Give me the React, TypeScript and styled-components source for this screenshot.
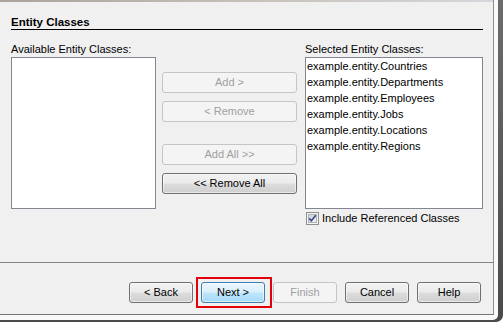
import React from "react";
import styled, { createGlobalStyle, css } from "styled-components";

const GlobalStyle = createGlobalStyle`
  html, body {
    margin: 0;
    padding: 0;
  }
  body {
    font-family: "Liberation Sans", Arial, sans-serif;
    font-size: 11px;
    color: #000;
    background: #fff;
  }
`;

const Frame = styled.div`
  width: 503px;
  height: 322px;
  background: linear-gradient(#6c6c6c, #4a4a4a);
  border-bottom-right-radius: 7px;
  overflow: hidden;
`;

const Client = styled.div`
  width: 498px;
  height: 320px;
  background: #f9f9f9;
  border-bottom-right-radius: 5px;
`;

const Panel = styled.div`
  width: 494px;
  height: 315px;
  box-sizing: border-box;
  background: #f0f0f0;
  border-right: 1px solid #8e8e8e;
  border-bottom: 1px solid #777;
  display: flex;
  flex-direction: column;
`;

const TopEdge = styled.div`
  height: 2px;
  background: linear-gradient(to right, #a9a39b, #c8c3bc 55%, #d6d6dc);
`;

const Header = styled.div`
  margin: 0 10px 0 11px;
  padding-top: 13px;
  border-bottom: 1px solid #000;
`;

const Title = styled.div`
  font-weight: bold;
  font-size: 11.5px;
  line-height: 14px;
`;

const Body = styled.div`
  flex: 1;
  display: flex;
  padding: 13px 0 0 11px;
  gap: 6px;
`;

const Column = styled.div<{ $width: number }>`
  width: ${(p) => p.$width}px;
  display: flex;
  flex-direction: column;
`;

const Label = styled.div`
  line-height: 13px;
  margin-bottom: 1px;
  white-space: nowrap;
`;

const ListBox = styled.div`
  height: 152px;
  box-sizing: border-box;
  border: 1px solid #828790;
  background: #fff;
  padding-left: 1px;
`;

const ListItem = styled.div`
  line-height: 16px;
  white-space: nowrap;
`;

const Middle = styled.div`
  width: 135px;
  padding-top: 29px;
  margin-right: 2px;
  display: flex;
  flex-direction: column;
  gap: 22px;
`;

const ButtonStack = styled.div`
  display: flex;
  flex-direction: column;
  gap: 8px;
`;

type Variant = "normal" | "disabled" | "default";

const Button = styled.button<{ $variant?: Variant; $width?: number }>`
  width: ${(p) => (p.$width ? `${p.$width}px` : "100%")};
  height: 21px;
  box-sizing: border-box;
  padding: 0;
  font-family: "Liberation Sans", Arial, sans-serif;
  font-size: 11px;
  line-height: 19px;
  text-align: center;
  border-radius: 3px;
  color: #000;
  border: 1px solid #707070;
  background: linear-gradient(#f2f2f2 0%, #ebebeb 48%, #dddddd 52%, #cfcfcf 100%);
  box-shadow: inset 0 0 0 1px rgba(255, 255, 255, 0.55);
  ${(p) =>
    p.$variant === "disabled" &&
    css`
      color: #a0a0a0;
      border-color: #c3c5c7;
      background: #f4f4f4;
      box-shadow: none;
    `}
  ${(p) =>
    p.$variant === "default" &&
    css`
      border-color: #3c7fb1;
      background: linear-gradient(#eaf6fd 0%, #d9f0fc 48%, #bee6fd 52%, #a7d9f5 100%);
    `}
`;

const CheckRow = styled.label`
  display: flex;
  align-items: center;
  gap: 3px;
  margin-top: 3px;
  padding-left: 1px;
  line-height: 13px;
  white-space: nowrap;
`;

const Footer = styled.div`
  height: 52px;
  box-sizing: border-box;
  border-top: 1px solid #858585;
  padding: 19px 12px 0 0;
  display: flex;
  justify-content: flex-end;
  align-items: flex-start;
  gap: 8px;
`;

const Highlight = styled.div`
  position: relative;
  display: flex;

  &::after {
    content: "";
    position: absolute;
    top: -5px;
    left: -5px;
    right: -7px;
    bottom: -5px;
    border: 2px solid #e3000b;
    pointer-events: none;
  }
`;

const CheckBox = () => (
  <svg width="13" height="13" viewBox="0 0 13 13">
    <defs>
      <linearGradient id="cbg" x1="0" y1="0" x2="1" y2="1">
        <stop offset="0" stopColor="#cbcfd5" />
        <stop offset="1" stopColor="#f6f6f6" />
      </linearGradient>
    </defs>
    <rect x="0.5" y="0.5" width="12" height="12" fill="#f4f4f4" stroke="#8f8f8f" />
    <rect x="2.5" y="2.5" width="8" height="8" fill="url(#cbg)" stroke="#b0b4ba" />
    <path d="M3.2 6.4 L5.3 8.8 L9.8 3.2" fill="none" stroke="#3a4e86" strokeWidth="1.7" />
  </svg>
);

const selected = [
  "example.entity.Countries",
  "example.entity.Departments",
  "example.entity.Employees",
  "example.entity.Jobs",
  "example.entity.Locations",
  "example.entity.Regions",
];

export default function App() {
  return (
    <>
      <GlobalStyle />
      <Frame>
        <Client>
          <Panel>
            <TopEdge />
            <Header>
              <Title>Entity Classes</Title>
            </Header>

            <Body>
              <Column $width={145}>
                <Label>Available Entity Classes:</Label>
                <ListBox />
              </Column>

              <Middle>
                <ButtonStack>
                  <Button $variant="disabled" disabled>Add &gt;</Button>
                  <Button $variant="disabled" disabled>&lt; Remove</Button>
                </ButtonStack>
                <ButtonStack>
                  <Button $variant="disabled" disabled>Add All &gt;&gt;</Button>
                  <Button>&lt;&lt; Remove All</Button>
                </ButtonStack>
              </Middle>

              <Column $width={178}>
                <Label>Selected Entity Classes:</Label>
                <ListBox>
                  {selected.map((name) => (
                    <ListItem key={name}>{name}</ListItem>
                  ))}
                </ListBox>
                <CheckRow>
                  <CheckBox />
                  Include Referenced Classes
                </CheckRow>
              </Column>
            </Body>

            <Footer>
              <Button $width={64}>&lt; Back</Button>
              <Highlight>
                <Button $width={64} $variant="default">Next &gt;</Button>
              </Highlight>
              <Button $width={64} $variant="disabled" disabled>Finish</Button>
              <Button $width={64}>Cancel</Button>
              <Button $width={64}>Help</Button>
            </Footer>
          </Panel>
        </Client>
      </Frame>
    </>
  );
}
